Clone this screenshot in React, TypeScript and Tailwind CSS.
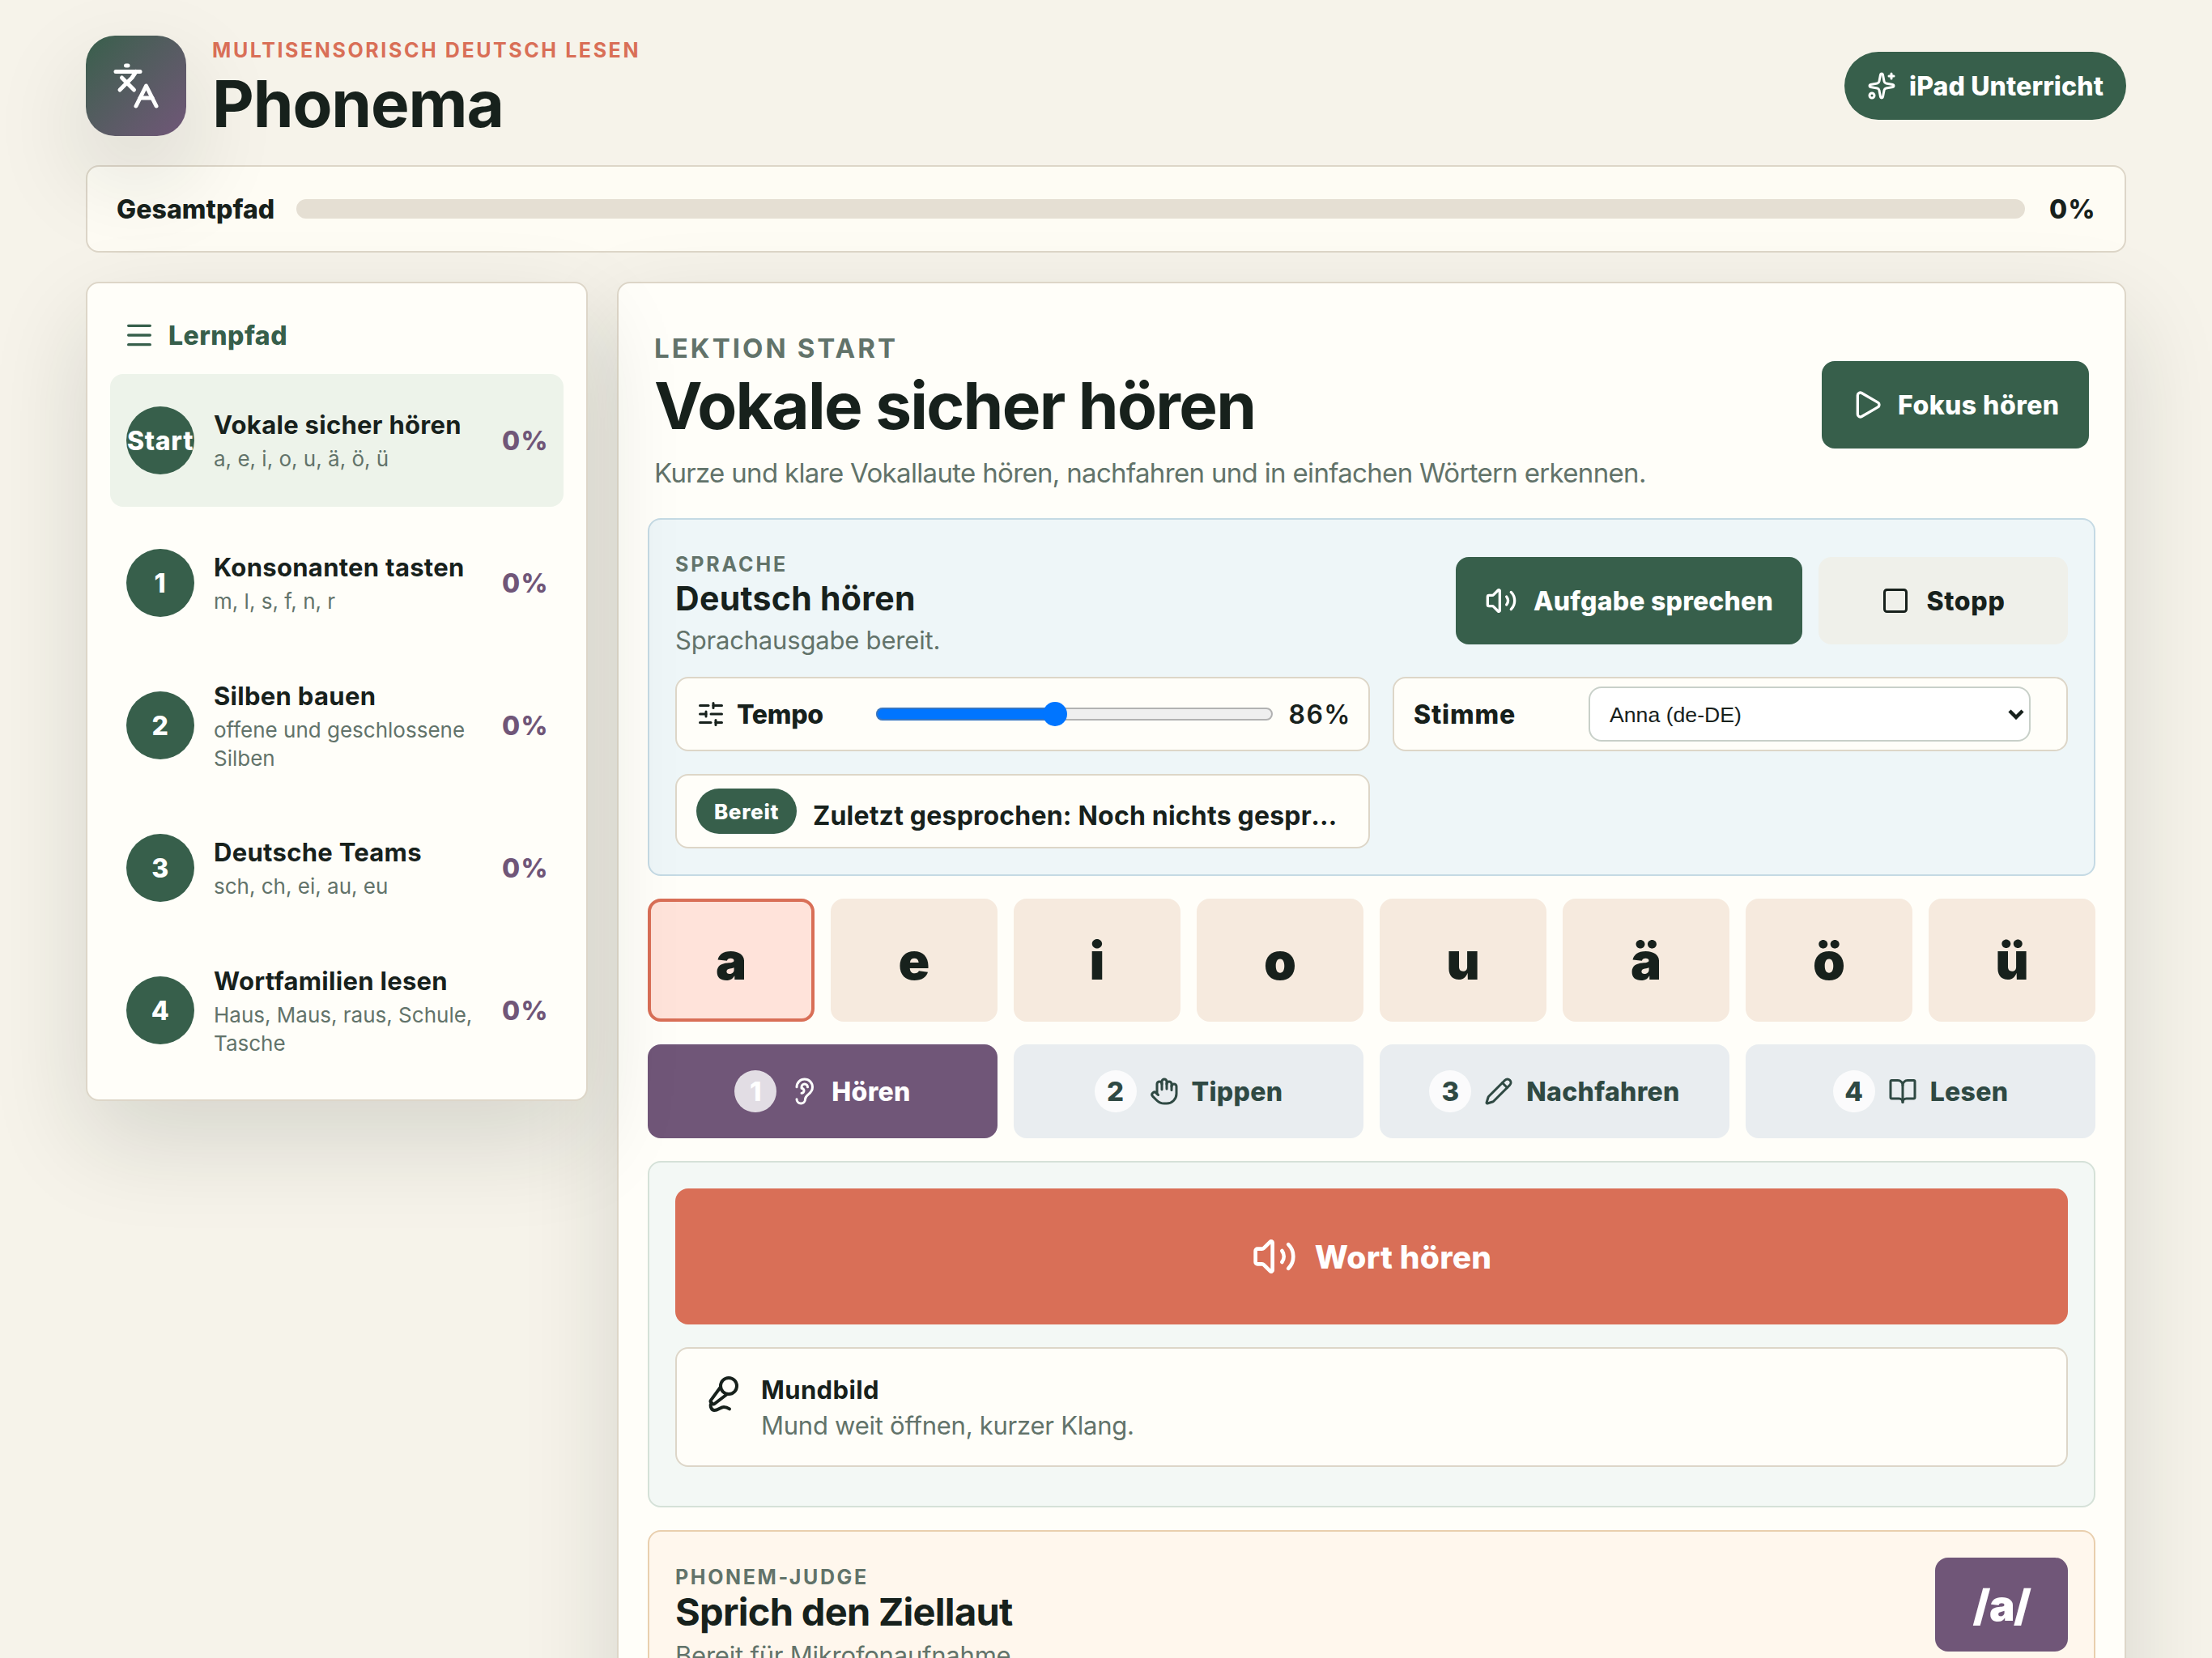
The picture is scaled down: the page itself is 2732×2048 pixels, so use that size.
import {
    BookOpen,
    Ear,
    Hand,
    Languages,
    Menu,
    MicVocal,
    Pencil,
    Play,
    SlidersHorizontal,
    Sparkles,
    Square,
    Volume2,
    type LucideIcon,
} from 'lucide-react';

interface Lesson {
    badge: string;
    title: string;
    detail: string;
    progress: number;
}

interface Step {
    label: string;
    icon: LucideIcon;
}

const lessons: Lesson[] = [
    {badge: 'Start', title: 'Vokale sicher hören', detail: 'a, e, i, o, u, ä, ö, ü', progress: 0},
    {badge: '1', title: 'Konsonanten tasten', detail: 'm, l, s, f, n, r', progress: 0},
    {badge: '2', title: 'Silben bauen', detail: 'offene und geschlossene Silben', progress: 0},
    {badge: '3', title: 'Deutsche Teams', detail: 'sch, ch, ei, au, eu', progress: 0},
    {badge: '4', title: 'Wortfamilien lesen', detail: 'Haus, Maus, raus, Schule, Tasche', progress: 0},
];

const sounds = ['a', 'e', 'i', 'o', 'u', 'ä', 'ö', 'ü'];

const steps: Step[] = [
    {label: 'Hören', icon: Ear},
    {label: 'Tippen', icon: Hand},
    {label: 'Nachfahren', icon: Pencil},
    {label: 'Lesen', icon: BookOpen},
];

function Header() {
    return (
        <header className="flex h-[124px] items-center justify-between">
            <div className="flex items-center gap-8">
                <div className="flex size-[124px] items-center justify-center rounded-[36px] bg-linear-135 from-[#375f4b] to-[#705678] text-white shadow-[0_48px_120px_rgba(23,33,28,0.14)]">
                    <Languages size={60} />
                </div>
                <div className="pt-px">
                    <p className="text-[25px] leading-8 font-bold tracking-[2.59px] text-[#d96f57] uppercase">
                        Multisensorisch Deutsch lesen
                    </p>
                    <h1 className="mt-2.5 text-[80px] leading-[80px] font-bold tracking-[-1.13px]">Phonema</h1>
                </div>
            </div>
            <div className="flex h-[84px] w-[348px] items-center gap-4 rounded-full bg-[#375f4b] pl-7 text-[32px] font-extrabold tracking-[0.13px] text-white">
                <Sparkles size={36} />
                <span className="pt-0.5">iPad Unterricht</span>
            </div>
        </header>
    );
}

function TotalProgress() {
    return (
        <section className="mt-9 flex h-[108px] items-center rounded-2xl border-2 border-[#ddd6c8] bg-[#fffdf5]/90 px-9 text-[32px] font-extrabold">
            <span className="w-[222px] pt-0.5 tracking-[0.09px]">Gesamtpfad</span>
            <div className="h-6 flex-1 rounded-full bg-[#e5dfd3]" />
            <span className="-mr-px ml-[30px] pt-0.5 tracking-[1.5px]">0%</span>
        </section>
    );
}

function Sidebar() {
    return (
        <aside className="sticky top-9 flex flex-col gap-3 rounded-2xl border-2 border-[#ddd6c8] bg-[#fffef9] p-7 shadow-[0_48px_120px_rgba(23,33,28,0.14)]">
            <div className="flex h-[72px] items-center gap-4 px-4 text-[32px] font-extrabold tracking-[0.47px] text-[#375f4b]">
                <Menu size={40} />
                <span className="pt-0.5">Lernpfad</span>
            </div>
            {lessons.map((lesson, index) => (
                <button
                    key={lesson.badge}
                    className={`flex h-[164px] items-center rounded-2xl px-5 text-left ${index === 0 ? 'bg-[#edf3ea]' : ''}`}
                >
                    <span className="flex size-[84px] shrink-0 items-center justify-center rounded-full bg-[#375f4b] pt-0.5 text-[32px] font-extrabold tracking-[0.7px] text-white">
                        {lesson.badge}
                    </span>
                    <span className="ml-6 flex-1">
                        <strong className="block text-[31px] leading-[41px] font-bold tracking-[0.3px]">{lesson.title}</strong>
                        <small className="mt-1 block text-[26px] leading-[35px] text-[#62736a]">{lesson.detail}</small>
                    </span>
                    <span className="-mr-0.5 pt-0.5 text-[32px] font-extrabold tracking-[1.5px] text-[#705678]">
                        {lesson.progress}%
                    </span>
                </button>
            ))}
        </aside>
    );
}

function LessonHeader() {
    return (
        <div className="flex h-[226px] items-center justify-between px-2">
            <div className="pt-[18px]">
                <p className="text-[33px] leading-[44px] font-bold tracking-[3.07px] text-[#62736a] uppercase">Lektion Start</p>
                <h2 className="mt-[9px] text-[80px] leading-[80px] font-bold tracking-[-1.7px]">Vokale sicher hören</h2>
                <p className="mt-[18px] text-[33px] leading-[50px] tracking-[-0.67px] text-[#62736a]">
                    Kurze und klare Vokallaute hören, nachfahren und in einfachen Wörtern erkennen.
                </p>
            </div>
            <button className="mt-0.5 flex h-[108px] w-[330px] items-center gap-[18px] rounded-2xl bg-[#375f4b] pl-9 text-[32px] font-extrabold tracking-[0.45px] text-white">
                <Play size={40} />
                <span className="pt-0.5">Fokus hören</span>
            </button>
        </div>
    );
}

function SpeechPanel() {
    return (
        <section className="rounded-2xl border-2 border-[#c5dae4] bg-[#eef6f8] p-8">
            <div className="flex h-[134px] items-start justify-between">
                <div className="pt-2">
                    <p className="text-[25px] leading-[30px] font-bold tracking-[2.87px] text-[#62736a] uppercase">Sprache</p>
                    <h3 className="mt-0.5 text-[41px] leading-[50px] font-bold tracking-[0.3px]">Deutsch hören</h3>
                    <p className="mt-1.5 text-[31px] leading-[41px] tracking-[-0.19px] text-[#62736a]">Sprachausgabe bereit.</p>
                </div>
                <div className="flex gap-5 pt-3.5 text-[32px] font-extrabold">
                    <button className="flex h-[108px] w-[428px] items-center gap-5 rounded-2xl bg-[#375f4b] pl-9 tracking-[0.2px] text-white">
                        <Volume2 size={40} />
                        <span className="pt-0.5">Aufgabe sprechen</span>
                    </button>
                    <button className="flex h-[108px] w-[308px] items-center justify-center gap-5 rounded-2xl bg-[#eff0ea] tracking-[0.7px]">
                        <Square size={36} />
                        <span className="pt-0.5">Stopp</span>
                    </button>
                </div>
            </div>

            <div className="mt-7 grid grid-cols-[858px_834px] gap-7">
                <div className="flex h-[92px] items-center rounded-2xl border-2 border-[#ddd6c8] bg-[#fffef9] px-6">
                    <span className="flex w-[222px] items-center gap-3.5 text-[32px] font-extrabold tracking-[-0.3px]">
                        <SlidersHorizontal size={36} />
                        <span className="pt-0.5">Tempo</span>
                    </span>
                    <div className="relative h-4 w-[490px] rounded-full border-2 border-[#b2b2b2] bg-[#efefef]">
                        <div className="absolute -top-0.5 -left-0.5 h-4 w-[222px] rounded-l-full border-2 border-r-0 border-[#3676c3] bg-[#0075ff]" />
                        <div className="absolute -top-[9px] left-[204px] size-[30px] rounded-full bg-[#0075ff]" />
                    </div>
                    <span className="-mr-[3px] ml-auto pt-0.5 text-[32px] font-semibold tracking-[1.5px]">86%</span>
                </div>

                <div className="flex h-[92px] items-center rounded-2xl border-2 border-[#ddd6c8] bg-[#fffef9] px-6">
                    <span className="w-[216px] pt-0.5 text-[32px] font-extrabold tracking-[0.87px]">Stimme</span>
                    <button className="flex h-[68px] w-[546px] items-center justify-between rounded-2xl border-2 border-[#c8d0c9] bg-white pr-1.5 pl-6 font-['Liberation_Sans',Arial,sans-serif] text-[26.67px]">
                        <span className="pt-0.5">Anna (de-DE)</span>
                        <svg width="20" height="13" viewBox="0 0 20 13" fill="none" stroke="currentColor" strokeWidth="4.5">
                            <path d="M2 2l8 8 8-8" />
                        </svg>
                    </button>
                </div>

                <div className="flex h-[92px] items-center gap-5 rounded-2xl border-2 border-[#ddd6c8] bg-[#fffef9] px-6">
                    <span className="flex h-14 w-[124px] shrink-0 items-center justify-center rounded-full bg-[#375f4b] text-[26px] font-extrabold tracking-[0.7px] text-white">
                        Bereit
                    </span>
                    <strong className="min-w-0 flex-1 truncate pt-[11px] text-[32px] font-bold tracking-[0.2px]">
                        Zuletzt gesprochen: Noch nichts gesprochen
                    </strong>
                </div>
            </div>
        </section>
    );
}

function SoundPicker() {
    return (
        <div className="grid grid-cols-8 gap-5">
            {sounds.map((sound, index) => (
                <button
                    key={sound}
                    className={`flex h-[152px] items-center justify-center rounded-2xl border-4 pt-0.5 text-[64px] font-black ${
                        index === 0 ? 'border-[#d96f57] bg-[#ffe3da]' : 'border-[#f6eade] bg-[#f6eade]'
                    }`}
                >
                    {sound}
                </button>
            ))}
        </div>
    );
}

function StepTabs() {
    return (
        <div className="grid grid-cols-4 gap-5">
            {steps.map(({label, icon: Icon}, index) => (
                <button
                    key={label}
                    className={`flex h-[116px] items-center justify-center gap-4 rounded-2xl text-[32px] font-extrabold tracking-[0.3px] ${
                        index === 0 ? 'bg-[#705678] text-white' : 'bg-[#e9edf0] text-[#2f4943]'
                    }`}
                >
                    <span className="flex size-[52px] items-center justify-center rounded-full bg-white/80 pt-0.5 text-[33px] tracking-normal">
                        {index + 1}
                    </span>
                    <Icon size={36} />
                    <span className="pt-0.5">{label}</span>
                </button>
            ))}
        </div>
    );
}

function ListenPanel() {
    return (
        <section className="h-[428px] rounded-2xl border-2 border-[#d5e1d8] bg-[#f3f8f5] p-8">
            <button className="flex h-[168px] w-full items-center justify-center gap-[22px] rounded-2xl bg-[#d96f57] text-[39px] font-extrabold tracking-[0.2px] text-white">
                <Volume2 size={56} />
                <span className="pt-[3px]">Wort hören</span>
            </button>
            <div className="mt-7 flex h-[148px] items-start gap-6 rounded-2xl border-2 border-[#ddd6c8] bg-[#fffef9] px-8 pt-8">
                <MicVocal size={48} />
                <div className="text-[31px] leading-[38px]">
                    <strong className="block font-bold tracking-[0.38px]">Mundbild</strong>
                    <p className="mt-1.5 tracking-[-0.25px] text-[#62736a]">Mund weit öffnen, kurzer Klang.</p>
                </div>
            </div>
        </section>
    );
}

function JudgePanel() {
    return (
        <section className="flex h-[420px] items-start justify-between rounded-2xl border-2 border-[#e9cfae] bg-[#fff7ed] p-8">
            <div className="pt-[9px]">
                <p className="text-[25px] leading-[30px] font-bold tracking-[2.64px] text-[#62736a] uppercase">Phonem-Judge</p>
                <h3 className="text-[47px] leading-[56px] font-bold tracking-[-0.7px]">Sprich den Ziellaut</h3>
                <p className="mt-1.5 text-[31px] leading-[40px] tracking-[-0.22px] text-[#62736a]">Bereit für Mikrofonaufnahme.</p>
            </div>
            <span className="flex h-[116px] w-[164px] items-center justify-center rounded-2xl bg-[#705678] pt-[3px] text-[53px] font-black tracking-[-1.4px] text-white">
                /a/
            </span>
        </section>
    );
}

export default function App() {
    return (
        <div className="h-[2048px] w-[2732px] overflow-clip bg-[#f6f3ea] px-[106px] pt-11 font-['Inter','Noto_Sans',sans-serif] text-[#17211c]">
            <Header />
            <TotalProgress />
            <div className="mt-9 grid grid-cols-[620px_1864px] items-start gap-9">
                <Sidebar />
                <main className="flex flex-col gap-7 rounded-2xl border-2 border-[#ddd6c8] bg-[#fffef9] p-9 shadow-[0_48px_120px_rgba(23,33,28,0.14)]">
                    <LessonHeader />
                    <SpeechPanel />
                    <SoundPicker />
                    <StepTabs />
                    <ListenPanel />
                    <JudgePanel />
                </main>
            </div>
        </div>
    );
}
